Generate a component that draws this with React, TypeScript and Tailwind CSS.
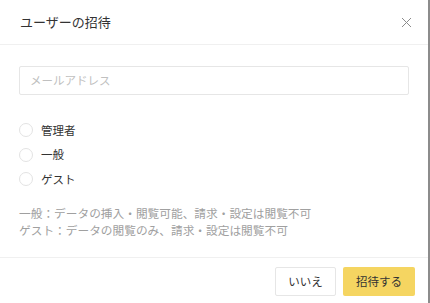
const roles = ["管理者", "一般", "ゲスト"];

export default function App() {
  return (
    <div
      className="flex w-[430px] h-[303px] bg-[#8c8c8c]"
      style={{ fontFamily: '"Noto Sans CJK JP", "Noto Sans", sans-serif' }}
    >
      <div className="flex flex-col w-[428px] h-full bg-white">
        <div className="flex items-center justify-between h-[45px] pl-5 pr-[16px] border-b border-[#f0f0f0]">
          <span className="text-[13px] text-[#333]">ユーザーの招待</span>
          <svg width="11" height="11" viewBox="0 0 11 11" className="text-[#8c8c8c]">
            <path d="M1 1L10 10M10 1L1 10" stroke="currentColor" strokeWidth="1" />
          </svg>
        </div>

        <div className="flex flex-col px-[19px] pt-[21px]">
          <div className="flex items-center h-[29px] px-[10px] border border-[#e6e6e6] rounded-[2px] text-[11.5px] text-[#c0c0c0]">
            メールアドレス
          </div>

          <div className="flex flex-col mt-[23px]">
            {roles.map((r) => (
              <div key={r} className="flex items-center h-[24.5px] gap-2">
                <span className="w-[14px] h-[14px] rounded-full border border-[#e3e3e3]" />
                <span className="text-[11.5px] text-[#333]">{r}</span>
              </div>
            ))}
          </div>

          <div className="mt-[12px] text-[11.7px] leading-[17px] text-[#a0a0a0]">
            <p>一般：データの挿入・閲覧可能、請求・設定は閲覧不可</p>
            <p>ゲスト：データの閲覧のみ、請求・設定は閲覧不可</p>
          </div>
        </div>

        <div className="mt-auto flex justify-end gap-[7px] h-[46px] pt-[9px] pr-[13px] border-t border-[#f0f0f0]">
          <button className="h-[29px] w-[61px] border border-[#e6e6e6] rounded-[2px] bg-white text-[11.5px] text-[#333]">
            いいえ
          </button>
          <button className="h-[29px] w-[72px] rounded-[2px] bg-[#f5d561] text-[11.5px] text-[#333]">
            招待する
          </button>
        </div>
      </div>
    </div>
  );
}
